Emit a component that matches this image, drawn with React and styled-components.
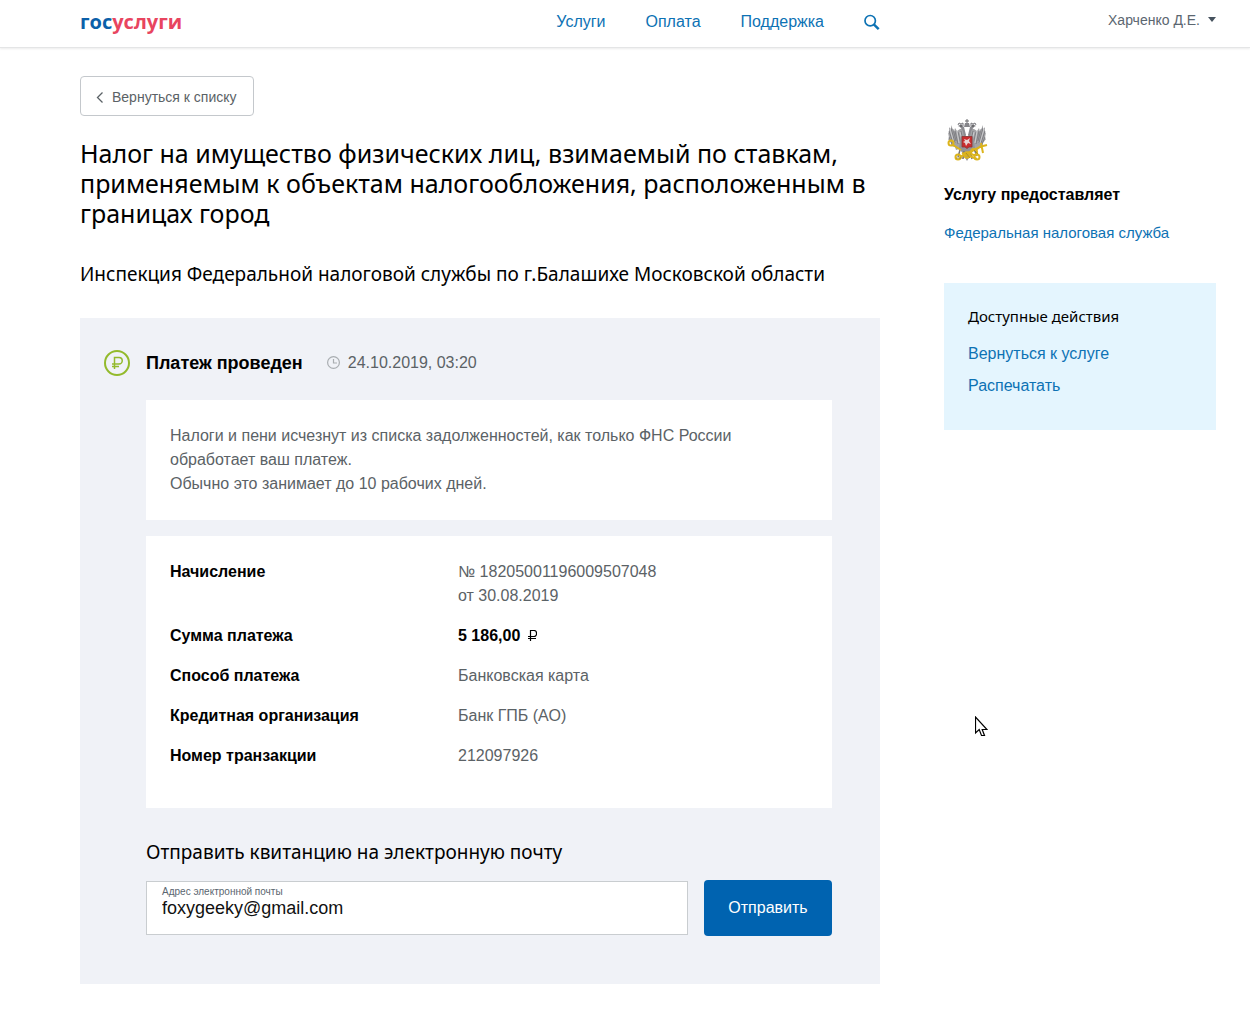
import React from "react";
import styled, { createGlobalStyle } from "styled-components";

const BODY_FONT = '"Liberation Sans", Arial, sans-serif';
const HEAD_FONT = '"Noto Sans", "Open Sans", sans-serif';

const GlobalStyle = createGlobalStyle`
  *, *::before, *::after { box-sizing: border-box; }
  body {
    margin: 0;
    background: #fff;
    color: #000;
    font: 16px/24px ${BODY_FONT};
  }
  h1, h2, h3, p, dl, dd, ul { margin: 0; padding: 0; }
  ul { list-style: none; }
`;

const Columns = styled.div`
  display: grid;
  grid-template-columns: minmax(0, 1fr) 272px;
  column-gap: 64px;
  padding: 0 34px 0 80px;
`;

const Header = styled.header`
  border-bottom: 1px solid #e4e5e6;
  box-shadow: 0 1px 2px rgba(0, 0, 0, 0.08);
`;

const HeaderColumns = styled(Columns)`
  align-items: center;
  height: 47px;
  padding-bottom: 4px;
`;

const HeaderLeft = styled.div`
  display: flex;
  justify-content: space-between;
  align-items: center;
`;

const Logo = styled.a`
  font: 700 20px/24px "Open Sans", sans-serif;
  color: #0b60a9;
  text-decoration: none;
`;

const LogoAccent = styled.span`
  color: #e8455f;
`;

const Nav = styled.nav`
  display: flex;
  align-items: center;
  gap: 40px;
`;

const Link = styled.a`
  color: #0d72b4;
  font-size: ${(p) => (p.$small ? 15 : 16)}px;
  text-decoration: none;
`;

const IconButton = styled.button`
  display: flex;
  padding: 0;
  border: 0;
  background: none;
  color: #0d72b4;
`;

const UserButton = styled.button`
  display: flex;
  align-items: center;
  justify-self: end;
  gap: 8px;
  padding: 0 0 4px;
  border: 0;
  background: none;
  color: #5b6670;
  font: 14px/20px ${BODY_FONT};
`;

const Main = styled.main`
  padding: 28px 0 39px;
`;

const BackButton = styled.button`
  display: flex;
  align-items: center;
  gap: 8px;
  height: 40px;
  padding: 2px 16px 0 15px;
  border: 1px solid #c4c8cc;
  border-radius: 4px;
  background: #fff;
  color: #5b6266;
  font: 14px/20px ${BODY_FONT};
`;

const Title = styled.h1`
  margin-top: 22px;
  font: 400 25px/30px ${HEAD_FONT};
`;

const Subtitle = styled.h2`
  margin-top: 34px;
  font: 400 19px/24px ${HEAD_FONT};
`;

const Panel = styled.section`
  margin-top: 32px;
  padding: 32px 48px 48px 24px;
  background: #f0f2f7;
`;

const Status = styled.div`
  display: flex;
  align-items: center;
  height: 26px;
`;

const StatusTitle = styled.h3`
  margin: 0 24px 0 16px;
  font: 700 18px/24px ${BODY_FONT};
`;

const StatusTime = styled.time`
  display: flex;
  align-items: center;
  gap: 8px;
  color: #5b6266;
`;

const PanelBody = styled.div`
  display: grid;
  row-gap: 16px;
  margin: 24px 0 0 42px;
`;

const Card = styled.div`
  padding: 24px 24px ${(p) => (p.$tall ? 40 : 24)}px;
  background: #fff;
  color: #5b6266;
`;

const Details = styled.dl`
  display: grid;
  grid-template-columns: 288px 1fr;
  row-gap: 16px;
`;

const Term = styled.dt`
  color: #000;
  font-weight: 700;
`;

const Amount = styled.dd`
  display: flex;
  align-items: center;
  gap: 8px;
  color: #000;
  font-weight: 700;
`;

const Form = styled.form`
  display: grid;
  grid-template-columns: minmax(0, 1fr) 128px;
  gap: 16px;
  margin-top: 16px;
  align-items: center;
`;

const FormTitle = styled.h3`
  grid-column: 1 / -1;
  font: 400 19px/24px ${HEAD_FONT};
`;

const Field = styled.div`
  display: flex;
  flex-direction: column;
  height: 54px;
  padding: 4px 15px;
  border: 1px solid #c9cdd0;
  background: #fff;
`;

const FieldLabel = styled.label`
  color: #5b6670;
  font-size: 10px;
  line-height: 12px;
`;

const FieldInput = styled.input`
  width: 100%;
  padding: 0;
  border: 0;
  outline: 0;
  background: none;
  color: #111;
  font: 18px/20px ${BODY_FONT};
`;

const Submit = styled.button`
  height: 56px;
  border: 0;
  border-radius: 4px;
  background: #0063b0;
  color: #fff;
  font: 16px/24px ${BODY_FONT};
`;

const Aside = styled.aside`
  padding-top: 71px;
`;

const ProviderTitle = styled.h2`
  margin: 20px 0 14px;
  font: 700 16px/24px ${BODY_FONT};
`;

const Actions = styled.section`
  display: grid;
  margin-top: 38px;
  padding: 20px 24px 32px;
  background: #e4f5fe;
`;

const ActionsTitle = styled.h3`
  margin-bottom: 13px;
  font: 400 15px/26px ${HEAD_FONT};
`;

const ActionList = styled.ul`
  display: grid;
  row-gap: 8px;
`;

const Pointer = styled.svg`
  position: absolute;
  left: 975px;
  top: 716px;
`;

const Emblem = styled.svg`
  display: block;
  margin-left: 3px;
`;

function SearchIcon() {
  return (
    <svg width="16" height="16" viewBox="0 0 16 16" fill="none" stroke="currentColor">
      <circle cx="6.2" cy="6.7" r="5.2" strokeWidth="1.7" />
      <path d="M9.8 10.3 14.7 15.2" strokeWidth="2.4" />
    </svg>
  );
}

function RubleIcon() {
  return (
    <svg width="26" height="26" viewBox="0 0 26 26" fill="none" stroke="#93ba2c">
      <circle cx="13" cy="13" r="12" strokeWidth="2" />
      <path d="M10.5 19V7.500H15a3.200 3.200 0 0 1 0 6.500H8M8 16.500h7" strokeWidth="1.5" />
    </svg>
  );
}

function ClockIcon() {
  return (
    <svg width="13" height="15" viewBox="0 0 13 15" fill="none" stroke="#a9adb1">
      <circle cx="6.5" cy="6.5" r="5.900" strokeWidth="1.2" />
      <path d="M6.500 3v4H10" strokeWidth="1.2" />
    </svg>
  );
}

function EagleWing() {
  return (
    <g>
      <path d="M19 17 16 10 13 10 10 12 8 9 7 13 4 6 4 11 2 8 2 14 1 13 2 19 1 20 4 24 4 27 8 28 9 31 15 29Z" fill="#a3a3a6" />
      <path d="M4 9 8 24M2 12 6 24M8 12 11 25M11 13 14 25M2 18 5 25M14 12 16 22M6 10 9 22" stroke="#66666b" strokeWidth="0.6" />
      <path d="M3 10 7 24M10 12 12 24M13 13 15 22" stroke="#e6e6e8" strokeWidth="0.6" />
      <path d="M19 16 17 8 14 5 11 7 13 8 16 12 17 18Z" fill="#8b8b90" />
      <path d="M11 6 12 4 14 5 16 4 16 7" fill="none" stroke="#77777c" strokeWidth="1" />
      <circle cx="14" cy="7" r="0.7" fill="#333" />
    </g>
  );
}

function CoatOfArms() {
  return (
    <Emblem width="41" height="44" viewBox="0 0 41 44" fill="none" role="img" aria-label="Герб">
      <EagleWing />
      <g transform="translate(40 0) scale(-1 1)">
        <EagleWing />
      </g>
      <path d="M20 0v6M18 2h4" stroke="#68686d" strokeWidth="1" />
      <path d="M17 8 18 4h4l1 4Z" fill="#85858a" />
      <path d="M14 17h12l2 12-4 6-4 7-4-7-4-6Z" fill="#939397" />
      <path d="M13 31 11 38M17 32l-1 8M23 32l2 8M27 30l3 7" stroke="#75757a" strokeWidth="1.5" />
      <g stroke="#dcb41c" strokeWidth="2">
        <circle cx="4" cy="24" r="2.5" />
        <path d="M6 26 14 31M13 38l22-11M15 34l15 6M34 24l2 10M32 28l8-2" />
        <circle cx="11" cy="38" r="2.500" />
        <circle cx="20" cy="36" r="2.700" />
        <circle cx="27" cy="33" r="3" />
        <circle cx="30" cy="38" r="2.500" />
      </g>
      <path d="M9 39h7M19 34l4 5M27 31l4 4" stroke="#9c8220" strokeWidth="0.700" />
      <path d="M15 17.500h10v10.500h-3l-2 1.500-2-1.500h-3Z" fill="#c92c2e" stroke="#8e3533" strokeWidth="0.800" />
      <path d="m17 20 3 1 3-2-1 3 2 3-3-1-2 3-1-3-2-1 2-1Z" fill="#e9d5d5" />
    </Emblem>
  );
}

const details = [
  ["Способ платежа", "Банковская карта"],
  ["Кредитная организация", "Банк ГПБ (АО)"],
  ["Номер транзакции", "212097926"],
];

export default function App() {
  return (
    <>
      <GlobalStyle />
      <Header>
        <HeaderColumns>
          <HeaderLeft>
            <Logo href="#">гос<LogoAccent>услуги</LogoAccent></Logo>
            <Nav>
              <Link href="#">Услуги</Link>
              <Link href="#">Оплата</Link>
              <Link href="#">Поддержка</Link>
              <IconButton type="button" aria-label="Поиск"><SearchIcon /></IconButton>
            </Nav>
          </HeaderLeft>
          <UserButton type="button">
            Харченко Д.Е.
            <svg width="8" height="5" viewBox="0 0 8 5"><path d="M0 0h8L4 5Z" fill="#46525e" /></svg>
          </UserButton>
        </HeaderColumns>
      </Header>

      <Columns>
        <Main>
          <BackButton type="button">
            <svg width="8" height="12" viewBox="0 0 8 12" fill="none" stroke="#5b6266" strokeWidth="1.3">
              <path d="M6.500 1.500 1.500 6.500l5 5" />
            </svg>
            Вернуться к списку
          </BackButton>
          <Title>
            Налог на имущество физических лиц, взимаемый по ставкам, применяемым к объектам
            налогообложения, расположенным в границах город
          </Title>
          <Subtitle>Инспекция Федеральной налоговой службы по г.Балашихе Московской области</Subtitle>

          <Panel>
            <Status>
              <RubleIcon />
              <StatusTitle>Платеж проведен</StatusTitle>
              <StatusTime dateTime="2019-10-24T03:20"><ClockIcon />24.10.2019, 03:20</StatusTime>
            </Status>
            <PanelBody>
              <Card>
                <p>Налоги и пени исчезнут из списка задолженностей, как только ФНС России обработает ваш платеж.</p>
                <p>Обычно это занимает до 10 рабочих дней.</p>
              </Card>
              <Card $tall>
                <Details>
                  <Term>Начисление</Term>
                  <dd>№ 18205001196009507048<br />от 30.08.2019</dd>
                  <Term>Сумма платежа</Term>
                  <Amount>
                    5 186,00
                    <svg width="9" height="12" viewBox="0 0 9 12" fill="none" stroke="#000" strokeWidth="1.2" role="img" aria-label="рублей">
                      <path d="M2.500 11V.5H6A2.500 2.500 0 0 1 8.500 3v1A2.500 2.500 0 0 1 6 6.500H0M0 8.500h8" />
                    </svg>
                  </Amount>
                  {details.map(([term, value]) => (
                    <React.Fragment key={term}>
                      <Term>{term}</Term>
                      <dd>{value}</dd>
                    </React.Fragment>
                  ))}
                </Details>
              </Card>
              <Form onSubmit={(e) => e.preventDefault()}>
                <FormTitle>Отправить квитанцию на электронную почту</FormTitle>
                <Field>
                  <FieldLabel htmlFor="email">Адрес электронной почты</FieldLabel>
                  <FieldInput id="email" type="email" defaultValue="foxygeeky@gmail.com" />
                </Field>
                <Submit type="submit">Отправить</Submit>
              </Form>
            </PanelBody>
          </Panel>
        </Main>

        <Aside>
          <CoatOfArms />
          <ProviderTitle>Услугу предоставляет</ProviderTitle>
          <Link href="#" $small>Федеральная налоговая служба</Link>
          <Actions>
            <ActionsTitle>Доступные действия</ActionsTitle>
            <ActionList>
              <li><Link href="#">Вернуться к услуге</Link></li>
              <li><Link href="#">Распечатать</Link></li>
            </ActionList>
          </Actions>
        </Aside>
      </Columns>

      <Pointer width="13" height="21" viewBox="0 0 13 21" aria-hidden="true">
        <path d="M.5 1v16l3.700-3.500 2.300 6h3l-2.300-6h4.800Z" fill="#fff" stroke="#000" strokeWidth="1.2" />
      </Pointer>
    </>
  );
}
